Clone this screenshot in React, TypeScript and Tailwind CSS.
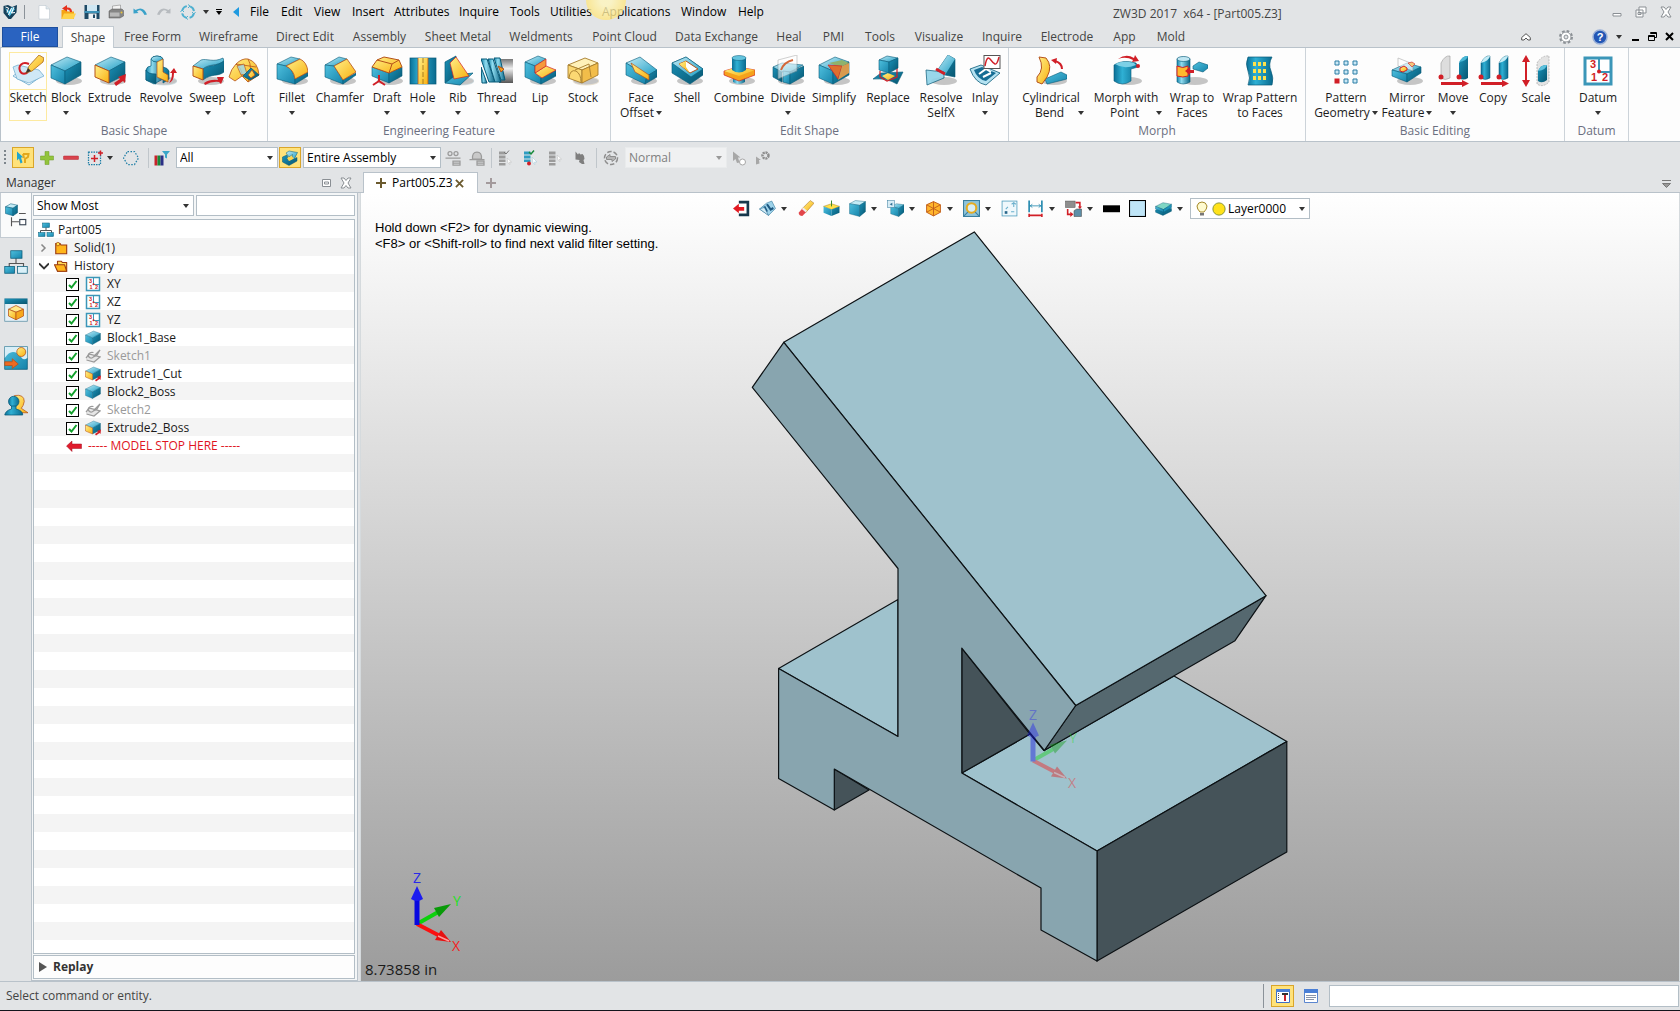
import { ReactNode } from 'react';
import clsx from 'clsx';

// ---------------------------------------------------------------- icons

function Defs() {
  return (
    <svg className="absolute h-0 w-0" aria-hidden="true">
      <defs>
        <linearGradient id="blueTop" x1="0" y1="0" x2="1" y2="1">
          <stop offset="0" stopColor="#c4ecf6" />
          <stop offset="1" stopColor="#1a9cc4" />
        </linearGradient>
        <linearGradient id="blueLeft" x1="0" y1="0" x2="1" y2="1">
          <stop offset="0" stopColor="#4fc0de" />
          <stop offset="1" stopColor="#1583aa" />
        </linearGradient>
        <linearGradient id="blueRight" x1="0" y1="0" x2="1" y2="1">
          <stop offset="0" stopColor="#1b93ba" />
          <stop offset="1" stopColor="#07556f" />
        </linearGradient>
        <linearGradient id="cyl" x1="0" y1="0" x2="1" y2="0">
          <stop offset="0" stopColor="#1283ab" />
          <stop offset="0.35" stopColor="#8fdcf0" />
          <stop offset="1" stopColor="#0a6485" />
        </linearGradient>
        <linearGradient id="slab" x1="0" y1="0" x2="1" y2="0">
          <stop offset="0" stopColor="#0b7097" />
          <stop offset="0.35" stopColor="#2fb0d4" />
          <stop offset="1" stopColor="#0a6a8e" />
        </linearGradient>
        <linearGradient id="gold" x1="0" y1="0" x2="1" y2="1">
          <stop offset="0" stopColor="#fff08a" />
          <stop offset="1" stopColor="#f9b010" />
        </linearGradient>
        <linearGradient id="steel" x1="0" y1="0" x2="0" y2="1">
          <stop offset="0" stopColor="#777" />
          <stop offset="0.4" stopColor="#eee" />
          <stop offset="1" stopColor="#555" />
        </linearGradient>
      </defs>
    </svg>
  );
}

const T = 'url(#blueTop)';
const L = 'url(#blueLeft)';
const R = 'url(#blueRight)';
const C = 'url(#cyl)';
const Y = 'url(#gold)';
const EDGE = '#075a78';
const RED = '#d11f27';
const ORANGE = '#b5521a';

const shadow = <ellipse cx="19" cy="26" rx="13" ry="4" fill="#000" opacity="0.22" />;

const boxFaces = (
  <g stroke={EDGE} strokeWidth="0.6" strokeLinejoin="round">
    <path d="M1 10L17 2L31 7L15 16Z" fill={T} />
    <path d="M1 10L15 16V29L1 23Z" fill={L} />
    <path d="M15 16L31 7V20L15 29Z" fill={R} />
  </g>
);

const extrudeFaces = (
  <g>
    <g stroke={EDGE} strokeWidth="0.6" strokeLinejoin="round">
      <path d="M1 10L17 2L31 7L15 16Z" fill={T} />
      <path d="M15 16L31 7V20L15 28Z" fill={R} />
    </g>
    <path d="M1 10L15 16V28L1 22Z" fill={Y} stroke={ORANGE} />
    <path d="M20 28L26 24L24 22L32 19L31 28L29 26L22 31Z" fill={RED} />
  </g>
);

const icons: Record<string, ReactNode> = {
  sketch: (
    <g>
      <path d="M1 21L12 13L31 20L17 30Z" fill="#fff" stroke="#7fb6d6" />
      <path d="M1 12L6 10L27 15L32 21L17 28L5 24Z" fill="#cfe8f6" stroke="#6aa9cd" strokeWidth="0.7" />
      <path d="M17 9C10 6 6 11 8 16C10 20 14 19 16 17" fill="none" stroke={RED} strokeWidth="2" />
      <path d="M14 18L17 11L27 0L32 3L31 7L20 16Z" fill={Y} stroke="#a8671a" strokeWidth="0.8" />
      <path d="M14 18L16 13L19 16Z" fill="#333" />
    </g>
  ),
  block: <g>{shadow}{boxFaces}</g>,
  extrude: <g>{shadow}{extrudeFaces}</g>,
  revolve: (
    <g stroke={EDGE} strokeWidth="0.7">
      {shadow}
      <path d="M1 15Q2 11 6 11V4Q7 1 12 1T18 4V24L9 29L1 25Z" fill={C} />
      <path d="M6 4Q7 1 12 1T18 4Q17 7 12 7T6 4Z" fill={T} />
      <path d="M1 15Q2 19 11 19V29L1 25Z" fill={R} />
      <path d="M18 12Q23 13 24 16V24L18 28Z" fill={R} />
      <path d="M12 7L18 4V17L23 20V27L12 22Z" fill={Y} stroke={ORANGE} />
      <path d="M24 28Q29 26 29 18H32L29 13L25 18H27Q27 24 24 28Z" fill={RED} stroke="none" />
    </g>
  ),
  sweep: (
    <g>
      {shadow}
      <g stroke={EDGE} strokeWidth="0.6">
        <path d="M1 11L9 5C15 3 21 8 31 3L32 6C24 12 18 8 11 14Z" fill={T} />
        <path d="M11 14C18 9 24 12 32 6V17C26 22 20 18 11 25Z" fill={R} />
      </g>
      <path d="M1 11L11 14V25L1 21Z" fill={Y} stroke={ORANGE} />
      <path d="M12 28Q18 24 26 25L25 22L32 22L29 29L27 27Q20 26 13 30Z" fill={RED} />
    </g>
  ),
  loft: (
    <g stroke={ORANGE} strokeWidth="0.8" strokeLinejoin="round">
      <path d="M1 22Q3 14 8 9Q14 3 20 4Q30 7 31 20L20 27L14 21L7 26Z" fill={Y} />
      <path d="M8 9Q14 13 14 21M20 4Q25 12 20 27M8 9L28 12" fill="none" />
      <path d="M9 11L16 9L19 19L13 20Z" fill="#9fd8ea" opacity="0.8" />
      <path d="M15 21L23 13L31 20L22 25Z" fill={R} stroke={EDGE} />
      <path d="M20 20L24 15L27 20L23 23Z" fill={Y} />
    </g>
  ),
  fillet: (
    <g>
      {shadow}
      <g stroke={EDGE} strokeWidth="0.6">
        <path d="M1 9L15 2L24 4L10 11Z" fill={T} />
        <path d="M1 9L10 11Q17 14 19 24V29L1 24Z" fill={L} />
        <path d="M19 24L32 17V21L19 29Z" fill={R} />
      </g>
      <path d="M10 11L24 4Q31 7 32 17L19 24Q18 15 10 11Z" fill={Y} stroke={ORANGE} strokeWidth="0.8" />
    </g>
  ),
  chamfer: (
    <g>
      {shadow}
      <g stroke={EDGE} strokeWidth="0.6">
        <path d="M1 10L15 2L23 4L10 11Z" fill={T} />
        <path d="M1 10L10 11L19 25V29L1 22Z" fill={L} />
        <path d="M19 25L32 18V20L19 29Z" fill={R} />
      </g>
      <path d="M10 11L23 4L32 17L19 25Z" fill={Y} stroke={ORANGE} strokeWidth="0.8" />
    </g>
  ),
  draft: (
    <g>
      {shadow}
      <g stroke={EDGE} strokeWidth="0.6">
        <path d="M1 12L18 18V28L1 21Z" fill={L} />
        <path d="M18 18L31 12V21L18 28Z" fill={R} />
      </g>
      <path d="M1 12L6 5L13 2L28 5L31 12L18 18Z" fill={Y} stroke={ORANGE} />
      <path d="M6 5L21 9L28 5M21 9L18 18" fill="none" stroke={ORANGE} />
      <path d="M8 20V26L2 30M8 26L14 30" stroke={RED} strokeWidth="2" fill="none" />
    </g>
  ),
  hole: (
    <g>
      <rect x="3" y="3" width="26" height="26" fill="url(#slab)" stroke={EDGE} strokeWidth="0.7" />
      <rect x="11" y="3" width="10" height="26" fill={Y} />
      <path d="M11 3V29M21 3V29" stroke={ORANGE} strokeWidth="0.8" />
      <path d="M16 3V29" stroke="#946b14" strokeWidth="0.8" strokeDasharray="5 2" />
    </g>
  ),
  rib: (
    <g stroke={EDGE} strokeWidth="0.7" strokeLinejoin="round">
      {shadow}
      <path d="M3 7L14 1V20L3 28Z" fill={R} />
      <path d="M3 28L14 20L31 18L18 30Z" fill={L} />
      <path d="M8 8L14 2L27 21L12 24Z" fill={Y} stroke={RED} />
    </g>
  ),
  thread: (
    <g>
      <rect x="18" y="4" width="14" height="24" fill="url(#steel)" />
      <g stroke={EDGE} fill={C}>
        <path d="M0 4H6L14 27H8Z" />
        <path d="M7 4H12L20 27H14Z" />
        <path d="M13 3H19L24 25H20Z" />
        <path d="M0 12L6 28H1Z" />
      </g>
      <path d="M17 11L23 14L20 17Z" fill="#f5a21c" stroke={ORANGE} />
    </g>
  ),
  lip: (
    <g>
      {shadow}
      <g stroke={EDGE} strokeWidth="0.6" strokeLinejoin="round">
        <path d="M1 7L14 1L22 4L11 11Z" fill={T} />
        <path d="M1 7L11 11V18L17 23V29L1 22Z" fill={L} />
        <path d="M17 23L32 15V21L17 29Z" fill={R} />
      </g>
      <path d="M11 18L22 11L32 15L18 23Z" fill={Y} stroke={RED} strokeWidth="0.7" />
      <path d="M11 11L22 4V11L11 18Z" fill="#f59a3c" stroke={RED} strokeWidth="0.7" />
    </g>
  ),
  stock: (
    <g stroke="#a57a2a" strokeWidth="0.9" fill="#fbd873">
      {shadow}
      <path d="M1 10L18 3L31 8L15 15Z" fill="#fff1b8" />
      <path d="M1 10L15 15V28L1 23Z" />
      <path d="M15 15L31 8V20L15 28Z" fill="#f2bd4a" />
      <path d="M2 23Q3 14 9 16Q14 19 14 27M8 15L22 9L24 22" fill="none" />
    </g>
  ),
  faceOffset: (
    <g>
      {shadow}
      <g stroke={EDGE} strokeWidth="0.6">
        <path d="M1 8L15 2L32 15L22 21Z" fill={T} />
        <path d="M1 8L1 20L20 29L22 21Z" fill={L} />
        <path d="M22 21L32 15V22L20 29Z" fill={R} />
      </g>
      <path d="M6 8L24 20V25L10 17Z" fill={Y} stroke={ORANGE} strokeWidth="0.7" />
    </g>
  ),
  shell: (
    <g>
      {shadow}
      <g stroke={EDGE} strokeWidth="0.6">
        <path d="M1 8L15 2L32 14V20L19 29L1 18Z" fill={R} />
        <path d="M1 8L15 2L32 14L20 22Z" fill={T} />
      </g>
      <path d="M8 9L15 6L27 14L19 18Z" fill="#fff" stroke={ORANGE} />
      <path d="M8 9L15 6L15 12L19 18Z" fill={Y} />
    </g>
  ),
  combine: (
    <g>
      {shadow}
      <path d="M10 20H22V27Q16 31 10 27Z" fill={C} />
      <path d="M1 16L15 12L32 15V20L16 26L1 20Z" fill="#f5a21c" stroke={RED} strokeWidth="0.7" />
      <path d="M1 16L15 12L32 15L16 21Z" fill={Y} />
      <path d="M9 3V15Q16 20 23 15V3Z" fill="url(#slab)" />
      <ellipse cx="16" cy="3" rx="7" ry="2.5" fill="#64c4de" stroke={EDGE} strokeWidth="0.5" />
    </g>
  ),
  divide: (
    <g>
      {shadow}
      <g stroke={EDGE} strokeWidth="0.6">
        <path d="M1 12L10 17V27L1 22Z" fill={R} />
        <path d="M1 12L10 8L31 10L18 17L10 17Z" fill={T} />
        <path d="M11 16L18 17V29L11 27Z" fill={L} />
        <path d="M18 17L32 11V21L18 29Z" fill={R} />
      </g>
      <path d="M6 5L25 0V16L6 24Z" fill="#fff" opacity="0.55" stroke="#888" strokeWidth="0.7" />
      <path d="M9 15Q12 7 21 5" fill="none" stroke="#d3683a" strokeWidth="2" />
    </g>
  ),
  simplify: (
    <g>
      {shadow}
      {boxFaces}
      <path d="M11 8L24 5L31 8L22 12Z" fill="#8fb26c" />
      <path d="M10 10L24 11L20 24Z" fill="#dd6f2e" stroke={RED} strokeWidth="0.7" />
      <path d="M24 11L31 8V18L20 25Z" fill="#d89a4e" />
    </g>
  ),
  replace: (
    <g>
      <path d="M1 24L9 18L31 17L25 29Q15 23 1 24Z" fill={R} stroke={EDGE} strokeWidth="0.6" />
      <path d="M8 16V22L15 26L25 22V12" fill="none" stroke={RED} strokeWidth="1.2" />
      <path d="M10 21L16 18L23 21L16 25Z" fill={Y} />
      <g stroke={EDGE} strokeWidth="0.6">
        <path d="M7 5L15 1L26 3L17 7Z" fill={T} />
        <path d="M7 5L17 7V18L7 15Z" fill={L} />
        <path d="M17 7L26 3V13L17 18Z" fill={R} />
      </g>
    </g>
  ),
  resolve: (
    <g>
      {shadow}
      <path d="M12 16L23 0L30 4V22L20 20Z" fill={R} stroke={EDGE} strokeWidth="0.6" />
      <path d="M12 16L23 0L30 4L20 20Z" fill={T} />
      <path d="M1 15L19 17V23L2 30Z" fill="#8fd3e8" stroke={EDGE} strokeWidth="0.8" opacity="0.9" />
      <path d="M11 14L20 19" stroke={RED} strokeWidth="3" />
    </g>
  ),
  inlay: (
    <g>
      <path d="M1 14L12 10L31 18L17 30Q6 28 1 14Z" fill="#b5e2f1" stroke={EDGE} strokeWidth="0.8" />
      <path d="M5 15L13 12L27 18L17 26Q8 24 5 15Z" fill="#166d94" />
      <path d="M10 19L17 14L22 17M14 22L22 18" stroke="#fff" strokeWidth="2" fill="none" />
      <rect x="15" y="0.5" width="16" height="13" fill="#fff" stroke="#555" />
      <path d="M16 11Q18 0 21 4T26 9T30 2" stroke={RED} strokeWidth="1.4" fill="none" />
    </g>
  ),
  cylBend: (
    <g>
      {shadow}
      <path d="M10 24L26 17L32 20V24L12 29Z" fill={L} stroke={EDGE} strokeWidth="0.6" />
      <path d="M4 2L11 3Q18 11 12 22L7 29L2 27V22Q10 14 4 2Z" fill={Y} stroke={ORANGE} />
      <path d="M20 6Q27 8 27 14" fill="none" stroke={RED} strokeWidth="2" />
      <path d="M16 5L22 3L21 9Z" fill={RED} />
    </g>
  ),
  morphPoint: (
    <g>
      {shadow}
      <path d="M4 10V26Q12 32 21 26V14L28 12L26 8Q13 4 4 10Z" fill="url(#slab)" stroke={EDGE} strokeWidth="0.6" />
      <path d="M5 9Q13 5 24 8L26 10Q14 15 5 9Z" fill="#7cd0e6" />
      <circle cx="28" cy="11" r="2" fill={RED} />
      <path d="M8 4Q16 -2 24 3L25 0L29 6L22 7L23 5Q16 1 8 4Z" fill={RED} />
    </g>
  ),
  wrapFaces: (
    <g>
      {shadow}
      <path d="M1 4Q7 0 14 4V27Q7 31 1 27Z" fill={C} stroke={EDGE} strokeWidth="0.6" />
      <ellipse cx="7.5" cy="4" rx="6.5" ry="2.5" fill="#bfe6f2" stroke={EDGE} strokeWidth="0.6" />
      <path d="M1 11Q7 14 12 11V21Q7 23 1 21Z" fill="#ffb92e" stroke={RED} />
      <path d="M9 16L14 12V15H18V18H14V20Z" fill={RED} />
      <path d="M17 11L23 7L32 10V13L27 17L17 14Z" fill={L} stroke={EDGE} strokeWidth="0.6" />
    </g>
  ),
  wrapPattern: (
    <g>
      <path d="M4 2H28Q24 9 27 16T28 30H4Q7 23 4 16T4 2Z" fill="url(#slab)" stroke={EDGE} strokeWidth="0.7" />
      <path
        d="M9 7h3v4h-3zM14 7h3v4h-3zM19 7h3v4h-3zM9 14h3v4h-3zM14 14h3v4h-3zM19 14h3v4h-3zM9 21h3v4h-3zM14 21h3v4h-3zM19 21h3v4h-3z"
        fill="#ffe14a"
      />
    </g>
  ),
  pattern: (
    <g fill="#cbe8f5" stroke="#2d7ea6">
      <path d="M5 6h4v4h-4zM14 6h4v4h-4zM23 6h4v4h-4zM5 15h4v4h-4zM14 15h4v4h-4zM23 15h4v4h-4zM14 24h4v4h-4zM23 24h4v4h-4z" />
      <rect x="5" y="24" width="4" height="4" fill={RED} stroke={RED} />
    </g>
  ),
  mirror: (
    <g>
      {shadow}
      <g stroke={EDGE} strokeWidth="0.6">
        <path d="M1 15L16 8L30 12L16 19Z" fill={T} />
        <path d="M1 15L16 19V27L1 21Z" fill={L} />
        <path d="M16 19L30 12V18L16 27Z" fill={R} />
      </g>
      <path d="M7 3L22 9V16L7 11Z" fill="#fff" opacity="0.6" stroke="#888" strokeWidth="0.7" />
      <path d="M9 13L13 11L16 13V15L12 17L9 16Z" fill={Y} stroke={RED} />
      <path d="M17 8L21 7L24 9L21 12Z" fill="#f3c67a" stroke={RED} strokeWidth="0.6" />
    </g>
  ),
  move: (
    <g>
      <path d="M4 8Q8 0 13 1V23Q8 26 4 23Z" fill="#ddd" stroke="#999" strokeWidth="0.6" />
      <path d="M22 8Q26 0 31 1V23Q26 26 22 23Z" fill={R} />
      <path d="M22 7Q26 0 31 1Q30 6 22 7Z" fill="#4ab8d6" />
      <circle cx="4" cy="22" r="2.5" fill={RED} />
      <circle cx="22" cy="22" r="2.5" fill={RED} />
      <path d="M4 27H25V25L32 28.5L25 32V30H4Z" fill={RED} />
    </g>
  ),
  copy: (
    <g>
      <path d="M4 8Q8 0 13 1V23Q8 26 4 23Z" fill="url(#slab)" stroke={EDGE} strokeWidth="0.5" />
      <path d="M4 8Q8 0 13 1Q12 6 4 8Z" fill="#c4ecf6" />
      <path d="M22 8Q26 0 31 1V23Q26 26 22 23Z" fill="url(#slab)" stroke={EDGE} strokeWidth="0.5" />
      <path d="M22 8Q26 0 31 1Q30 6 22 8Z" fill="#c4ecf6" />
      <circle cx="4" cy="22" r="2.5" fill={RED} />
      <circle cx="22" cy="22" r="2.5" fill={RED} />
      <path d="M4 27H25V25L32 28.5L25 32V30H4Z" fill={RED} />
    </g>
  ),
  scale: (
    <g>
      <path d="M6 0L10 7H7V25H10L6 32L2 25H5V7H2Z" fill={RED} />
      <path d="M17 8Q22 0 29 1V27Q23 33 17 29Z" fill="#e4e4e4" stroke="#999" strokeWidth="0.6" strokeDasharray="2 1" />
      <path d="M18 16Q21 9 27 10V25Q22 29 18 26Z" fill={R} />
      <path d="M18 16Q21 9 27 10Q26 15 18 16Z" fill="#5cc0dc" />
    </g>
  ),
  datum: (
    <g>
      <rect x="3" y="3" width="26" height="26" fill="#fff" stroke="#3b96b8" strokeWidth="3" />
      <path d="M17 3V17M17 17H29" stroke="#3b96b8" strokeWidth="2" fill="none" />
      <circle cx="17" cy="16.5" r="2" fill={RED} />
      <g fill={RED} fontFamily="Liberation Sans" fontWeight="700" fontSize="11">
        <text x="8" y="13">3</text>
        <text x="9" y="26">1</text>
        <text x="20" y="26">2</text>
      </g>
    </g>
  ),
  // tree and side tabs
  blockSmall: <g>{boxFaces}</g>,
  extrudeSmall: <g>{extrudeFaces}</g>,
  sketchOff: (
    <g fill="none" stroke="#9a9a9a" strokeWidth="2.5">
      <path d="M2 20L8 12L30 18L18 28L3 24" fill="#e6e6e6" />
      <path d="M17 9C8 7 4 15 9 19C13 22 17 19 19 15L30 4L24 14L15 19" />
    </g>
  ),
  assembly: (
    <g stroke={EDGE} strokeWidth="1">
      <path d="M16 11V17M5 23V17H27V23" fill="none" stroke="#555" strokeWidth="2" />
      <rect x="9" y="2" width="14" height="9" fill={L} />
      <rect x="1" y="21" width="13" height="8" fill={L} />
      <rect x="18" y="21" width="13" height="8" fill={L} />
    </g>
  ),
  assemblyTab: (
    <g stroke={EDGE} strokeWidth="1">
      <path d="M16 11V18M7 23V18H26V23" fill="none" stroke="#555" strokeWidth="1.5" />
      <rect x="9" y="1" width="15" height="10" fill={L} />
      <rect x="1" y="22" width="13" height="9" fill={L} />
      <rect x="18" y="22" width="13" height="9" fill="#d9f0f8" />
    </g>
  ),
  historyTab: (
    <g>
      <g stroke={EDGE} strokeWidth="0.7">
        <path d="M2 5L9 1L18 3L12 7Z" fill="#c4ecf6" />
        <path d="M2 5L12 7V17L2 14Z" fill={L} />
        <path d="M12 7L18 3V13L12 17Z" fill={R} />
      </g>
      <path d="M20 14H29M10 19V31M10 25H20" stroke="#555" strokeWidth="1.5" fill="none" />
      <rect x="21" y="22" width="8" height="7" fill="#fff" stroke="#3a4654" strokeWidth="1.5" />
    </g>
  ),
  partTab: (
    <g>
      <rect x="1" y="1" width="30" height="30" fill="#e4f1f7" stroke="#5a8ca4" />
      <rect x="1" y="1" width="30" height="7" fill={R} />
      <g stroke={ORANGE}>
        <path d="M6 15L16 10L26 15L16 19Z" fill="#ffe98a" />
        <path d="M6 15L16 19V29L6 24Z" fill={Y} />
        <path d="M16 19L26 15V24L16 29Z" fill="#f6a91e" />
      </g>
    </g>
  ),
  visualTab: (
    <g>
      <rect x="1" y="1" width="30" height="30" fill={L} stroke={EDGE} />
      <path d="M1 1H31V16Q26 20 22 14T12 8T1 16Z" fill="#d8eef7" />
      <circle cx="23" cy="8" r="6" fill={Y} stroke={ORANGE} />
      <path d="M1 21H11V17L19 24L11 30V26H1Z" fill="#ee6a22" stroke={ORANGE} />
    </g>
  ),
  roleTab: (
    <g>
      <path d="M14 2Q27 0 27 10Q26 16 23 19L32 25H18L12 12Z" fill={Y} stroke={ORANGE} />
      <circle cx="13" cy="10" r="7" fill="url(#slab)" stroke={EDGE} />
      <path d="M1 28Q2 22 10 20V16H16V20Q25 22 25 28Z" fill="url(#slab)" stroke={EDGE} />
    </g>
  ),
  folder: (
    <g stroke="#9a3b12" strokeWidth="2.5">
      <path d="M4 6H14L16 9H29V29H4Z" fill="#ffb51c" />
      <circle cx="9" cy="7" r="4" fill="#ffe34d" strokeWidth="1.5" />
    </g>
  ),
  folderOpen: (
    <g stroke="#9a3b12" strokeWidth="2.5" strokeLinejoin="round">
      <path d="M8 5H17L19 8H29V28H8Z" fill="#ffd95a" />
      <path d="M1 13H24L29 28H8Z" fill="#ffb51c" />
    </g>
  ),
  stop: <path d="M1 16L12 6V12H31V21H12V27Z" fill="#e01b2c" stroke="#a31020" />,
  // quick access
  logo: (
    <g>
      <path d="M3 4L12 2L20 6L30 2L29 17L18 30H13L3 18Z" fill="#16425c" />
      <path d="M6 8L14 14L20 6L26 10L15 25Z" fill="#4fc0e4" />
      <path d="M7 6L13 8L10 17M19 8L13 22M24 6L19 18L26 17" stroke="#fff" strokeWidth="2" fill="none" />
    </g>
  ),
  newDoc: (
    <g>
      <path d="M6 3H20L27 10V30H6Z" fill="#fff" stroke="#b4c0c8" />
      <path d="M20 3V10H27" fill="#dde6ec" stroke="#b4c0c8" />
    </g>
  ),
  open: (
    <g>
      <path d="M3 12H13L15 15H28V30H3Z" fill="#f5a416" />
      <path d="M3 30L8 19H32L27 30Z" fill="#ffd34a" />
      <path d="M24 16Q24 6 14 7V2L4 9L14 15V11Q20 10 20 16Z" fill="#e5311d" />
    </g>
  ),
  save: (
    <g>
      <rect x="1" y="2" width="30" height="28" fill="#1f4a66" />
      <rect x="6" y="2" width="20" height="12" fill="#cfe7f3" />
      <rect x="1" y="14" width="30" height="4" fill="#3f93b8" />
      <rect x="9" y="19" width="16" height="11" fill="#eef3f6" />
      <rect x="18" y="21" width="4" height="7" fill="#1f4a66" />
    </g>
  ),
  print: (
    <g>
      <path d="M9 4L25 2V14H9Z" fill="#f4f4f4" stroke="#777" />
      <path d="M2 14L8 10H28L31 13V24L24 28H2Z" fill="#858585" stroke="#555" />
      <path d="M4 17H23V25H4Z" fill="#b9b9b9" />
      <circle cx="27" cy="17" r="2" fill="#e8c33a" />
    </g>
  ),
  undo: <path d="M3 9V19L13 18L10 15Q18 8 25 22L30 21Q23 3 7 12Z" fill="#3aa2c9" />,
  redo: <path d="M29 9V19L19 18L22 15Q14 8 7 22L2 21Q9 3 25 12Z" fill="#b7bbbf" />,
  regen: (
    <g fill="none" stroke="#4fb0d0" strokeWidth="4">
      <circle cx="16" cy="16" r="12" strokeDasharray="12 6.85" strokeDashoffset="-3" />
      <path d="M16 1L20 4L16 8M31 16L28 20L24 16M16 31L12 28L16 24M1 16L4 12L8 16" strokeWidth="2" />
    </g>
  ),
  // selection toolbar
  pick: (
    <g>
      <path d="M4 3L17 15H12L15 25L11 27L8 17L4 21Z" fill="#21a4cf" />
      <path d="M16 8H27L26 14L20 18V26M16 8L18 16" fill="none" stroke="#e5a81a" strokeWidth="4" />
    </g>
  ),
  plus: <path d="M12 3H20V12H29V20H20V29H12V20H3V12H12Z" fill="#93c43c" stroke="#6d9a26" />,
  minus: <rect x="1" y="12" width="30" height="7" rx="1" fill="#d8424c" stroke="#b52a35" />,
  pickBox: (
    <g fill="none">
      <rect x="3" y="4" width="24" height="25" stroke="#1f7ea6" strokeWidth="2.5" strokeDasharray="3 2" />
      <path d="M15 10V24M8 17H22M27 1V11M22 6H32" stroke={RED} strokeWidth="3" />
    </g>
  ),
  hexagon: (
    <path d="M9 3H23L31 16L23 29H9L1 16Z" fill="none" stroke="#1f7ea6" strokeWidth="2.5" strokeDasharray="3 3" />
  ),
  colorFilter: (
    <g>
      <rect x="1" y="11" width="6" height="20" fill="#c8232b" />
      <rect x="7" y="11" width="6" height="20" fill="#178a3a" />
      <rect x="13" y="11" width="6" height="20" fill="#2b2f86" />
      <path d="M16 2H32L26 9V17L22 15V9Z" fill="#3aa6c8" />
    </g>
  ),
  scope: (
    <g stroke={EDGE}>
      <path d="M1 14L10 10L14 22L30 15V22L14 31L1 24Z" fill={R} />
      <path d="M8 6L14 2L31 5L25 17L20 19L21 9L14 14Z" fill={T} />
      <path d="M10 16L20 13L24 17L14 22Z" fill="#ffd34a" stroke="none" />
    </g>
  ),
  chainA: (
    <g stroke="#9b9b9b" strokeWidth="2.5" fill="none">
      <circle cx="10" cy="7" r="4" />
      <circle cx="22" cy="7" r="4" />
      <path d="M1 16H31M16 22H30V30H16ZM16 26H30" />
    </g>
  ),
  chainB: (
    <g stroke="#9b9b9b" strokeWidth="2.5" fill="none">
      <path d="M7 18Q6 4 16 4T25 18Z" fill="#c9c9c9" />
      <path d="M1 19H31M16 22H30V30H16ZM16 26H30" />
    </g>
  ),
  listA: (
    <g fill="#9b9b9b">
      <path d="M4 3h13v6h-13zM4 11h13v6h-13zM4 19h13v5h-13zM4 26h13v5h-13z" />
      <path d="M14 4L18 8L24 1" fill="none" stroke="#777" strokeWidth="2" />
      <path d="M20 16L29 24H25L26 29L22 26Z" fill="#fff" stroke="#bbb" />
    </g>
  ),
  listB: (
    <g fill="#2f9dc2">
      <path d="M4 3h13v6h-13zM4 11h13v6h-13zM4 19h13v5h-13z" />
      <path d="M14 4L18 8L24 1" fill="none" stroke="#178a3a" strokeWidth="3" />
      <circle cx="14" cy="27" r="4" fill={RED} />
      <path d="M20 14L30 24H25L26 29L22 26Z" fill="#fff" stroke="#9fc8d8" />
    </g>
  ),
  listC: (
    <g fill="#9b9b9b">
      <path d="M4 3h13v6h-13zM4 11h13v6h-13zM4 19h13v5h-13zM4 26h13v5h-13z" />
      <path d="M20 10L29 18H25L26 23L22 20Z" fill="#fff" stroke="#bbb" />
    </g>
  ),
  cursor: <path d="M7 3L12 9L14 6L17 9L21 8L24 12L25 18L23 20L25 28H20L14 24L15 20L7 19Z" fill="#7e7e7e" />,
  globe: (
    <g fill="none" stroke="#8e8e8e" strokeWidth="3">
      <circle cx="16" cy="16" r="13" strokeDasharray="9 4" />
      <path d="M7 14L14 9V13H25V18L18 23V19H7Z" fill="#b5b5b5" strokeWidth="2" />
    </g>
  ),
  cursorPlay: (
    <g>
      <path d="M4 3L19 15H14L17 25L12 26L9 18L4 22Z" fill="#a7a7a7" />
      <circle cx="23" cy="24" r="6" fill="#fff" stroke="#a7a7a7" strokeWidth="2" />
    </g>
  ),
  cursorGear: (
    <g>
      <path d="M2 13L12 20H8L9 27L2 29Z" fill="#a7a7a7" />
      <circle cx="21" cy="11" r="6" fill="#e2e4e6" stroke="#8e8e8e" strokeWidth="5" strokeDasharray="4 1.5" />
    </g>
  ),
  // view toolbar
  exit: (
    <g>
      <path d="M11 4H28V28H11" fill="none" stroke="#16384c" strokeWidth="5" />
      <path d="M0 16L11 7V13H21V20H11V25Z" fill="#e21a22" />
    </g>
  ),
  views: (
    <g>
      <path d="M1 17L14 6L24 2L31 16L18 29Z" fill="#9ed3ea" stroke="#2a6f96" />
      <path d="M10 12L15 22M15 8L22 18L27 15" stroke="#1d5780" strokeWidth="4" fill="none" />
      <path d="M1 17L10 14L18 29Z" fill="#d5edf7" stroke="#2a6f96" />
    </g>
  ),
  eraser: (
    <g>
      <path d="M10 16L25 1L32 6L17 23Z" fill={Y} stroke="#a5722a" />
      <path d="M3 24L10 16L17 23L10 30Q4 30 3 24Z" fill="#e2464a" />
      <path d="M9 17L12 14L19 20L16 23Z" fill="#eee" />
    </g>
  ),
  viewNormal: (
    <g>
      <path d="M1 12L16 7L31 12L16 18Z" fill="#ffe14a" stroke="#b38a1a" />
      <path d="M1 12L16 18V30L1 24Z" fill={L} />
      <path d="M16 18L31 12V24L16 30Z" fill={R} />
      <path d="M16 1V12" stroke="#3c8a2c" strokeWidth="2" />
    </g>
  ),
  shaded: (
    <g stroke={EDGE} strokeWidth="0.7" strokeLinejoin="round">
      <path d="M1 7L12 1L31 3L20 10Z" fill="#c4ecf6" />
      <path d="M1 7L20 10V31L1 26Z" fill={L} />
      <path d="M20 10L31 3V22L20 31Z" fill={R} />
    </g>
  ),
  wireBox: (
    <g fill="#ffb52c" stroke="#c2601c" strokeWidth="1.8" strokeLinejoin="round">
      <path d="M16 3L29 9V23L16 30L3 23V9Z" />
      <path d="M16 3V30M3 9L29 23M29 9L3 23" fill="none" />
    </g>
  ),
  boxViews: (
    <g>
      <g stroke={EDGE} strokeWidth="0.7">
        <path d="M7 12L18 7L32 9L22 16Z" fill={T} />
        <path d="M7 12L22 16V31L7 26Z" fill={L} />
        <path d="M22 16L32 9V23L22 31Z" fill={R} />
      </g>
      <rect x="1" y="1" width="13" height="13" fill="#d8edf6" stroke="#3a7f9f" />
      <path d="M5 8L10 5V11Z" fill="#2d6f94" />
    </g>
  ),
  zoomAll: (
    <g>
      <rect x="1" y="1" width="30" height="30" fill="#8fc5dc" stroke="#3a7f9f" strokeWidth="2" />
      <circle cx="16" cy="15" r="9" fill="#d9eef7" stroke="#e6ac22" strokeWidth="4" />
      <path d="M2 30L9 23M30 30L23 23" stroke="#3a7f9f" strokeWidth="2" />
    </g>
  ),
  pan: (
    <g>
      <rect x="2" y="2" width="28" height="28" fill="#eff8fc" stroke="#4f9dbd" strokeWidth="1.5" />
      <rect x="7" y="21" width="5" height="5" fill="#28668a" />
      <path d="M13 13L9 17M24 6V13M20 8L24 5L28 8M19 22H25" fill="none" stroke="#68aecb" strokeWidth="2" />
    </g>
  ),
  section: (
    <g fill="none">
      <path d="M4 1V23M28 1V23" stroke="#1f86ad" strokeWidth="3" />
      <path d="M5 11H27M10 8L6 11L10 14M22 8L26 11L22 14" stroke="#1f86ad" strokeWidth="1.5" />
      <path d="M4 29H28M4 26V32M28 26V32" stroke={RED} strokeWidth="3" />
    </g>
  ),
  swap: (
    <g>
      <rect x="1" y="2" width="18" height="12" fill="#8e8e8e" stroke="#555" />
      <path d="M17 20L22 17H31V31H17Z" fill="#5d8fa8" stroke="#444" />
      <path d="M5 17V27H12M20 5H28V14" fill="none" stroke={RED} strokeWidth="3" />
      <path d="M24 12H32L28 17ZM10 22V32L16 27Z" fill={RED} />
    </g>
  ),
  layers: (
    <g stroke={EDGE} strokeWidth="0.7">
      <path d="M1 19L18 14L31 16V21L15 29L1 23Z" fill={R} />
      <path d="M1 12L15 5L31 8L16 18Z" fill="#7fd6c4" />
      <path d="M1 12L16 18V23L1 17Z" fill={L} />
      <path d="M16 18L31 8V14L16 23Z" fill="#1b93ba" />
    </g>
  ),
  blackBar: <rect x="0" y="10" width="32" height="13" fill="#000" />,
  swatch: <rect x="1" y="1" width="30" height="30" fill="#bfe5f7" stroke="#000" strokeWidth="2" />,
};

function Icon({ name, className }: { name: string; className: string }) {
  return (
    <svg viewBox="0 0 32 32" className={clsx('shrink-0', className)} aria-hidden="true">
      {icons[name]}
    </svg>
  );
}

function Caret({ className = 'text-[#333]' }: { className?: string }) {
  return (
    <svg viewBox="0 0 6 4" className={clsx('h-1 w-1.5 shrink-0', className)} aria-hidden="true">
      <path d="M0 0H6L3 4Z" fill="currentColor" />
    </svg>
  );
}

// ---------------------------------------------------------------- controls

interface ComboProps {
  label: string;
  value: string;
  className: string;
  disabled?: boolean;
}

function Combo({ label, value, className, disabled }: ComboProps) {
  return (
    <div className={clsx('relative h-[21px] shrink-0', className)}>
      <select
        aria-label={label}
        disabled={disabled}
        className={clsx(
          'h-full w-full appearance-none border pr-4 pl-[3px] text-xs outline-none',
          disabled ? 'border-[#e9ebec] bg-[#f0f1f2] text-[#808080]' : 'border-[#b3bec6] bg-white text-black'
        )}
      >
        <option>{value}</option>
      </select>
      <span className="pointer-events-none absolute inset-y-0 right-[5px] flex items-center">
        <Caret className={disabled ? 'text-[#999]' : 'text-[#333]'} />
      </span>
    </div>
  );
}

function IconButton({ icon, label, className, size = 'size-4', active }: {
  icon: string;
  label: string;
  className?: string;
  size?: string;
  active?: boolean;
}) {
  return (
    <button
      type="button"
      aria-label={label}
      className={clsx(
        'flex shrink-0 items-center justify-center',
        active && 'h-[21px] border border-[#d9a52a] bg-[#ffe27a]',
        className
      )}
    >
      <Icon name={icon} className={size} />
    </button>
  );
}

// ---------------------------------------------------------------- title bar

const menus = [
  { label: 'File', w: 'w-[31px]' },
  { label: 'Edit', w: 'w-[33px]' },
  { label: 'View', w: 'w-[38px]' },
  { label: 'Insert', w: 'w-[42px]' },
  { label: 'Attributes', w: 'w-[65px]' },
  { label: 'Inquire', w: 'w-[51px]' },
  { label: 'Tools', w: 'w-[40px]' },
  { label: 'Utilities', w: 'w-[52px]' },
  { label: 'Applications', w: 'w-[79px]' },
  { label: 'Window', w: 'w-[57px]' },
  { label: 'Help', w: 'w-[40px]' },
];

const quickAccess = [
  { icon: 'newDoc', label: 'New' },
  { icon: 'open', label: 'Open' },
  { icon: 'save', label: 'Save' },
  { icon: 'print', label: 'Print' },
  { icon: 'undo', label: 'Undo' },
  { icon: 'redo', label: 'Redo' },
  { icon: 'regen', label: 'Regenerate' },
];

function TitleBar() {
  return (
    <header className="relative flex h-[26px] shrink-0 items-center pb-0.5">
      <Icon name="logo" className="ml-0.5 size-4" />
      <span className="mx-1.5 h-3.5 w-px bg-[#8b9299]" />
      <span className="w-px" />
      {quickAccess.map((q) => (
        <IconButton key={q.label} icon={q.icon} label={q.label} className="w-6" />
      ))}
      <button type="button" aria-label="Regenerate options" className="flex w-3 justify-center">
        <Caret />
      </button>
      <button type="button" aria-label="Customize" className="flex w-3.5 flex-col items-center gap-px">
        <span className="h-px w-1.5 bg-black" />
        <Caret className="text-black" />
      </button>
      <button type="button" aria-label="Collapse menu" className="flex w-5 justify-center">
        <svg viewBox="0 0 6 10" className="h-2.5 w-1.5">
          <path d="M6 0V10L0 5Z" fill="#1f9ae0" />
        </svg>
      </button>
      <nav className="ml-1 flex text-black">
        {menus.map((m) => (
          <button type="button" key={m.label} className={clsx('text-left whitespace-nowrap', m.w)}>
            {m.label}
          </button>
        ))}
      </nav>
      <span className="pointer-events-none absolute top-0 left-[586px] h-5 w-10 overflow-hidden">
        <span className="block size-10 -translate-y-1/2 rounded-full bg-[radial-gradient(circle,#fff6bdcc_20%,#ffe47acc_75%,#f5cf52aa_100%)]" />
      </span>
      <h1 className="absolute left-[1113px] pt-1 whitespace-pre text-[#444]">ZW3D 2017  x64 - [Part005.Z3]</h1>
      <div className="ml-auto flex items-center gap-[13px] pr-2 text-[#8a8f94]">
        <button type="button" aria-label="Minimize">
          <svg viewBox="0 0 10 10" className="size-2.5">
            <path d="M1 6.5H9V9H1Z" fill="#fff" stroke="currentColor" />
          </svg>
        </button>
        <button type="button" aria-label="Restore">
          <svg viewBox="0 0 12 12" className="size-3">
            <path d="M4 1H11V7H4ZM1 4H8V11H1ZM3 6.5H6V8.5H3Z" fill="#fff" stroke="currentColor" />
          </svg>
        </button>
        <button type="button" aria-label="Close">
          <svg viewBox="0 0 12 12" className="size-3">
            <path d="M1 1H4L6 3.5L8 1H11L8 6L11 11H8L6 8.5L4 11H1L4 6Z" fill="#fff" stroke="currentColor" />
          </svg>
        </button>
      </div>
    </header>
  );
}

// ---------------------------------------------------------------- ribbon

const tabs = [
  { label: 'Free Form', w: 'w-[75px]' },
  { label: 'Wireframe', w: 'w-[77px]' },
  { label: 'Direct Edit', w: 'w-[76px]' },
  { label: 'Assembly', w: 'w-[73px]' },
  { label: 'Sheet Metal', w: 'w-[84px]' },
  { label: 'Weldments', w: 'w-[82px]' },
  { label: 'Point Cloud', w: 'w-[85px]' },
  { label: 'Data Exchange', w: 'w-[99px]' },
  { label: 'Heal', w: 'w-[46px]' },
  { label: 'PMI', w: 'w-[43px]' },
  { label: 'Tools', w: 'w-[50px]' },
  { label: 'Visualize', w: 'w-[68px]' },
  { label: 'Inquire', w: 'w-[58px]' },
  { label: 'Electrode', w: 'w-[72px]' },
  { label: 'App', w: 'w-[43px]' },
  { label: 'Mold', w: 'w-[50px]' },
];

function RibbonTabs() {
  return (
    <div className="flex h-[21px] shrink-0 items-end text-[#444]">
      <button type="button" className="ml-0.5 h-[20px] w-14 border border-[#1d4f9e] bg-[#2a63c0] text-white">
        File
      </button>
      <button
        type="button"
        className="relative z-10 mr-px -mb-px ml-1 h-[22px] w-[52px] border border-b-0 border-[#c3cbd2] bg-[#fdfdfd]"
      >
        Shape
      </button>
      {tabs.map((t) => (
        <button type="button" key={t.label} className={clsx('h-[20px] shrink-0 whitespace-nowrap', t.w)}>
          {t.label}
        </button>
      ))}
      <div className="ml-auto flex h-full items-center pr-1.5">
        <button type="button" aria-label="Collapse ribbon" className="mr-[27px]">
          <svg viewBox="0 0 10 8" className="h-2 w-2.5">
            <path d="M5 0.7L9.3 4.5V7H7L5 5L3 7H0.7V4.5Z" fill="#fff" stroke="#555" />
          </svg>
        </button>
        <button type="button" aria-label="Settings" className="mr-[18px]">
          <svg viewBox="0 0 16 16" className="size-4">
            <circle cx="8" cy="8" r="6" fill="#fff" stroke="#8c9196" strokeWidth="2" strokeDasharray="2.7 2" />
            <circle cx="8" cy="8" r="5" fill="#fff" stroke="#8c9196" />
            <circle cx="8" cy="8" r="2" fill="#e2e4e6" stroke="#8c9196" />
          </svg>
        </button>
        <button type="button" aria-label="Help" className="mr-2">
          <svg viewBox="0 0 16 16" className="size-4">
            <circle cx="8" cy="8" r="7" fill="#2457b5" stroke="#9ab1d8" strokeWidth="1.5" />
            <text x="8" y="12" textAnchor="middle" fontSize="11" fontWeight="700" fontFamily="Liberation Sans" fill="#fff">
              ?
            </text>
          </svg>
        </button>
        <Caret />
        <div className="ml-2.5 flex items-center gap-2 text-black">
          <button type="button" aria-label="Minimize document">
            <svg viewBox="0 0 8 9" className="h-[9px] w-2">
              <path d="M0 7H7V9H0Z" fill="currentColor" />
            </svg>
          </button>
          <button type="button" aria-label="Restore document">
            <svg viewBox="0 0 9 9" className="size-[9px]" fill="none" stroke="currentColor">
              <path d="M2.5 1.5V0.5H8.5V5.5H6.5M0.5 3.5H6.5V8.5H0.5ZM0.5 4.5H6.5M2.5 1.5H8.5" />
            </svg>
          </button>
          <button type="button" aria-label="Close document">
            <svg viewBox="0 0 9 9" className="size-[9px]">
              <path d="M1 1L8 8M8 1L1 8" stroke="currentColor" strokeWidth="2" />
            </svg>
          </button>
        </div>
      </div>
    </div>
  );
}

interface Tool {
  icon: string;
  lines: string[];
  w: string;
  arrow?: 'below' | 'inline' | 'side';
  hot?: boolean;
}

const groups: { label: string; w: string; pad: string; tools: Tool[] }[] = [
  {
    label: 'Basic Shape',
    w: 'w-[267px]',
    pad: 'pl-2',
    tools: [
      { icon: 'sketch', lines: ['Sketch'], w: 'w-[38px]', arrow: 'below', hot: true },
      { icon: 'block', lines: ['Block'], w: 'w-[38px]', arrow: 'below' },
      { icon: 'extrude', lines: ['Extrude'], w: 'w-[49px]' },
      { icon: 'revolve', lines: ['Revolve'], w: 'w-[54px]' },
      { icon: 'sweep', lines: ['Sweep'], w: 'w-[39px]', arrow: 'below' },
      { icon: 'loft', lines: ['Loft'], w: 'w-[34px]', arrow: 'below' },
    ],
  },
  {
    label: 'Engineering Feature',
    w: 'w-[343px]',
    pad: 'pl-1',
    tools: [
      { icon: 'fillet', lines: ['Fillet'], w: 'w-[40px]', arrow: 'below' },
      { icon: 'chamfer', lines: ['Chamfer'], w: 'w-[56px]' },
      { icon: 'draft', lines: ['Draft'], w: 'w-[38px]', arrow: 'below' },
      { icon: 'hole', lines: ['Hole'], w: 'w-[33px]', arrow: 'below' },
      { icon: 'rib', lines: ['Rib'], w: 'w-[38px]', arrow: 'below' },
      { icon: 'thread', lines: ['Thread'], w: 'w-[40px]', arrow: 'below' },
      { icon: 'lip', lines: ['Lip'], w: 'w-[46px]' },
      { icon: 'stock', lines: ['Stock'], w: 'w-[40px]' },
    ],
  },
  {
    label: 'Edit Shape',
    w: 'w-[398px]',
    pad: 'pl-[5px]',
    tools: [
      { icon: 'faceOffset', lines: ['Face', 'Offset'], w: 'w-[50px]', arrow: 'inline' },
      { icon: 'shell', lines: ['Shell'], w: 'w-[42px]' },
      { icon: 'combine', lines: ['Combine'], w: 'w-[62px]' },
      { icon: 'divide', lines: ['Divide'], w: 'w-[36px]', arrow: 'below' },
      { icon: 'simplify', lines: ['Simplify'], w: 'w-[56px]' },
      { icon: 'replace', lines: ['Replace'], w: 'w-[52px]' },
      { icon: 'resolve', lines: ['Resolve', 'SelfX'], w: 'w-[54px]' },
      { icon: 'inlay', lines: ['Inlay'], w: 'w-[34px]', arrow: 'below' },
    ],
  },
  {
    label: 'Morph',
    w: 'w-[297px]',
    pad: 'pl-1.5',
    tools: [
      { icon: 'cylBend', lines: ['Cylindrical', 'Bend'], w: 'w-[72px]', arrow: 'side' },
      { icon: 'morphPoint', lines: ['Morph with', 'Point'], w: 'w-[78px]', arrow: 'side' },
      { icon: 'wrapFaces', lines: ['Wrap to', 'Faces'], w: 'w-[54px]' },
      { icon: 'wrapPattern', lines: ['Wrap Pattern', 'to Faces'], w: 'w-[82px]' },
    ],
  },
  {
    label: 'Basic Editing',
    w: 'w-[259px]',
    pad: 'pl-1.5',
    tools: [
      { icon: 'pattern', lines: ['Pattern', 'Geometry'], w: 'w-[68px]', arrow: 'inline' },
      { icon: 'mirror', lines: ['Mirror', 'Feature'], w: 'w-[54px]', arrow: 'inline' },
      { icon: 'move', lines: ['Move'], w: 'w-[38px]', arrow: 'below' },
      { icon: 'copy', lines: ['Copy'], w: 'w-[42px]' },
      { icon: 'scale', lines: ['Scale'], w: 'w-[44px]' },
    ],
  },
  {
    label: 'Datum',
    w: 'w-[64px]',
    pad: 'pl-3',
    tools: [{ icon: 'datum', lines: ['Datum'], w: 'w-[42px]', arrow: 'below' }],
  },
];

function ToolButton({ tool }: { tool: Tool }) {
  return (
    <button
      type="button"
      className={clsx('relative flex h-[75px] shrink-0 flex-col items-center pt-[7px] whitespace-nowrap', tool.w)}
    >
      {tool.hot && (
        <span className="absolute inset-x-0 top-1 h-[69px] border border-[#fdeaa0]">
          <span className="block h-[37px] border-b border-[#fdeaa0]" />
        </span>
      )}
      <Icon name={tool.icon} className="relative size-8" />
      <span className="relative mt-[3px] h-[15px] leading-4">{tool.lines[0]}</span>
      <span className="flex h-4 w-full items-center justify-center leading-4">
        {tool.arrow === 'side' && <span className="flex-1" />}
        {tool.lines[1]}
        {tool.arrow === 'inline' && <Caret className="ml-0.5 text-[#333]" />}
        {tool.arrow === 'below' && <Caret />}
        {tool.arrow === 'side' && (
          <span className="flex flex-1 justify-end pr-[3px]">
            <Caret />
          </span>
        )}
      </span>
    </button>
  );
}

function Ribbon() {
  return (
    <div className="flex h-[95px] shrink-0 border-y border-l border-[#b9c2ca] bg-[#fdfdfd] text-[#1c1c1c]">
      {groups.map((g) => (
        <section key={g.label} className={clsx('flex shrink-0 flex-col border-r border-[#ccd3d9]', g.w)}>
          <div className={clsx('flex', g.pad)}>
            {g.tools.map((t) => (
              <ToolButton key={t.lines.join(' ')} tool={t} />
            ))}
          </div>
          <h2 className="text-center leading-4 text-[#6b6f80]">{g.label}</h2>
        </section>
      ))}
    </div>
  );
}

// ---------------------------------------------------------------- selection bar

function SelectionBar() {
  return (
    <div className="flex h-[31px] shrink-0 items-center">
      <span className="mr-1.5 ml-1 h-4 w-0.5 bg-[repeating-linear-gradient(#7d858c_0_2px,transparent_2px_4px)]" />
      <IconButton icon="pick" label="Pick" active className="w-[22px]" />
      <IconButton icon="plus" label="Add to selection" className="ml-px w-6" />
      <IconButton icon="minus" label="Remove from selection" className="w-6" />
      <IconButton icon="pickBox" label="Pick by box" className="w-6" />
      <Caret />
      <IconButton icon="hexagon" label="Pick by polygon" className="ml-[5px] w-[26px]" />
      <span className="ml-1 h-5 w-px bg-[#c0c6cb]" />
      <IconButton icon="colorFilter" label="Color filter" className="ml-0.5 w-[22px]" />
      <Combo label="Entity filter" value="All" className="ml-[3px] w-[102px]" />
      <IconButton icon="scope" label="Selection scope" active className="ml-px w-[22px]" />
      <Combo label="Scope" value="Entire Assembly" className="ml-0.5 w-[138px]" />
      <IconButton icon="chainA" label="Chain" className="w-6" />
      <IconButton icon="chainB" label="Tangent chain" className="w-6" />
      <span className="ml-0.5 h-5 w-px bg-[#c0c6cb]" />
      <IconButton icon="listA" label="Pick first" className="w-[25px]" />
      <IconButton icon="listB" label="Pick next" className="w-[25px]" />
      <IconButton icon="listC" label="Pick last" className="w-[25px]" />
      <IconButton icon="cursor" label="Pick other" className="w-[25px]" />
      <span className="ml-1 h-5 w-px bg-[#c0c6cb]" />
      <IconButton icon="globe" label="Filter mode" className="ml-0.5 w-6" />
      <Combo label="Mode" value="Normal" disabled className="ml-0.5 w-[102px]" />
      <IconButton icon="cursorPlay" label="Run filter" className="w-6" />
      <IconButton icon="cursorGear" label="Filter settings" className="w-6" />
    </div>
  );
}

// ---------------------------------------------------------------- manager

const sideTabs = [
  { icon: 'historyTab', label: 'History Manager' },
  { icon: 'assemblyTab', label: 'Assembly Manager' },
  { icon: 'partTab', label: 'View Manager' },
  { icon: 'visualTab', label: 'Visual Manager' },
  { icon: 'roleTab', label: 'Role Manager' },
];

const history = [
  { label: 'XY', icon: 'datum' },
  { label: 'XZ', icon: 'datum' },
  { label: 'YZ', icon: 'datum' },
  { label: 'Block1_Base', icon: 'blockSmall' },
  { label: 'Sketch1', icon: 'sketchOff', muted: true },
  { label: 'Extrude1_Cut', icon: 'extrudeSmall' },
  { label: 'Block2_Boss', icon: 'blockSmall' },
  { label: 'Sketch2', icon: 'sketchOff', muted: true },
  { label: 'Extrude2_Boss', icon: 'extrudeSmall' },
];

function HistoryRow({ label, icon, muted }: { label: string; icon: string; muted?: boolean }) {
  return (
    <li>
      <label className="flex h-[18px] items-center pl-8">
        <span className="relative size-[13px]">
          <input
            type="checkbox"
            defaultChecked
            className="peer block size-[13px] appearance-none border border-black bg-white"
          />
          <svg
            viewBox="0 0 13 13"
            className="pointer-events-none absolute inset-0 hidden size-[13px] peer-checked:block"
            aria-hidden="true"
          >
            <path d="M3 7L5.5 9.5L10.5 3" fill="none" stroke="#12a02c" strokeWidth="2" />
          </svg>
        </span>
        <Icon name={icon} className="ml-1.5 size-4" />
        <span className={clsx('ml-1.5', muted && 'text-[#9a9a9a]')}>{label}</span>
      </label>
    </li>
  );
}

function Manager() {
  return (
    <aside className="flex w-[360px] shrink-0 flex-col">
      <div className="flex h-5 shrink-0 items-center border-b border-[#b9c2ca] pr-2 pl-1.5 text-[#333]">
        Manager
        <div className="ml-auto flex items-center gap-[9px] text-[#8a8f94]">
          <button type="button" aria-label="Dock panel">
            <svg viewBox="0 0 9 8" className="h-2 w-[9px]" fill="#fff" stroke="currentColor">
              <path d="M0.5 0.5H8.5V7.5H0.5Z" />
              <path d="M2.5 3H6.5V5H2.5Z" />
            </svg>
          </button>
          <button type="button" aria-label="Close panel">
            <svg viewBox="0 0 12 12" className="size-3">
              <path d="M1 1H4L6 3.5L8 1H11L8 6L11 11H8L6 8.5L4 11H1L4 6Z" fill="#fff" stroke="currentColor" />
            </svg>
          </button>
        </div>
      </div>
      <div className="flex min-h-0 flex-1">
        <div className="flex w-[31px] shrink-0 flex-col">
          {sideTabs.map((t, i) => (
            <button
              type="button"
              key={t.label}
              aria-label={t.label}
              className={clsx(
                'flex items-center justify-center',
                i === 0 ? 'h-[45px] border-b border-l border-[#c3cbd2] bg-[#fafbfb]' : 'h-12'
              )}
            >
              <Icon name={t.icon} className="size-6" />
            </button>
          ))}
        </div>
        <div className="mr-0.5 flex w-[327px] flex-col border-r border-b border-l border-[#b9c2ca] bg-[#f4f6f7] p-px pt-0.5 pr-0.5">
          <div className="flex shrink-0 gap-0.5">
            <Combo label="Display" value="Show Most" className="w-[161px]" />
            <input
              aria-label="Search history"
              className="h-[21px] min-w-0 flex-1 border border-[#b3bec6] bg-white px-1 outline-none"
            />
          </div>
          <ul className="mt-[3px] min-h-0 flex-1 overflow-hidden border border-[#b3bec6] bg-[repeating-linear-gradient(#ffffff_0_18px,#f4f4f4_18px_36px)] pt-px text-[#1a1a1a]">
            <li className="flex h-[18px] items-center pl-1">
              <Icon name="assembly" className="size-4" />
              <span className="ml-1">Part005</span>
            </li>
            <li className="flex h-[18px] items-center pl-0.5">
              <svg viewBox="0 0 16 16" className="size-4 p-1" aria-hidden="true">
                <path d="M3 1L10 8L3 15" fill="none" stroke="#888" strokeWidth="3" />
              </svg>
              <Icon name="folder" className="ml-0.5 size-3.5" />
              <span className="ml-1.5">Solid(1)</span>
            </li>
            <li>
              <div className="flex h-[18px] items-center pl-0.5">
                <svg viewBox="0 0 16 16" className="size-4 p-[3px]" aria-hidden="true">
                  <path d="M0 4L8 12L16 4" fill="none" stroke="#333" strokeWidth="3" />
                </svg>
                <Icon name="folderOpen" className="ml-0.5 size-3.5" />
                <span className="ml-1.5">History</span>
              </div>
              <ul>
                {history.map((h) => (
                  <HistoryRow key={h.label} {...h} />
                ))}
                <li className="flex h-[18px] items-center pl-8 text-[#e0141e]">
                  <Icon name="stop" className="size-4" />
                  <span className="ml-1.5">----- MODEL STOP HERE -----</span>
                </li>
              </ul>
            </li>
          </ul>
          <button
            type="button"
            className="mt-px flex h-6 shrink-0 items-center border border-[#b3bec6] bg-[#fdfdfd] pl-[5px] font-bold text-[#333]"
          >
            <svg viewBox="0 0 8 10" className="mr-1.5 h-2.5 w-2" aria-hidden="true">
              <path d="M0 0L8 5L0 10Z" fill="#555" />
            </svg>
            Replay
          </button>
        </div>
      </div>
    </aside>
  );
}

// ---------------------------------------------------------------- viewport

const viewTools = [
  { icon: 'exit', label: 'Exit' },
  { icon: 'views', label: 'Views', arrow: true },
  { icon: 'eraser', label: 'Erase' },
  { icon: 'viewNormal', label: 'Align view' },
  { icon: 'shaded', label: 'Shaded', arrow: true },
  { icon: 'boxViews', label: 'Standard views', arrow: true },
  { icon: 'wireBox', label: 'Wireframe display', arrow: true },
  { icon: 'zoomAll', label: 'Zoom all', arrow: true },
  { icon: 'pan', label: 'Pan' },
  { icon: 'section', label: 'Section view', arrow: true },
  { icon: 'swap', label: 'Show and hide', arrow: true },
  { icon: 'blackBar', label: 'Line color' },
  { icon: 'swatch', label: 'Face color' },
  { icon: 'layers', label: 'Layers', arrow: true },
];

function ViewToolbar() {
  return (
    <div className="relative flex h-[21px] items-center justify-center gap-1">
      {viewTools.map((t) => (
        <button type="button" key={t.label} aria-label={t.label} className="flex shrink-0 items-center">
          <span className="flex w-[22px] justify-center">
            <Icon name={t.icon} className="size-[17px]" />
          </span>
          {t.arrow && (
            <span className="flex w-3 justify-center">
              <Caret />
            </span>
          )}
        </button>
      ))}
      <div className="relative h-[21px] w-[120px] shrink-0">
        <select
          aria-label="Layer"
          className="h-full w-full appearance-none border border-[#b3bec6] bg-white pl-[37px] text-xs text-black outline-none"
        >
          <option>Layer0000</option>
        </select>
        <span className="pointer-events-none absolute inset-y-0 right-[5px] left-1.5 flex items-center">
          <svg viewBox="0 0 12 16" className="h-4 w-3" aria-hidden="true">
            <path d="M4 11Q1 8 1 5Q2 1 6 1T11 5Q11 8 8 11Z" fill="#fffbd0" stroke="#a58a2a" />
            <path d="M4 12H8V14.5H4Z" fill="#777" />
          </svg>
          <svg viewBox="0 0 16 16" className="ml-1 size-3.5" aria-hidden="true">
            <circle cx="8" cy="8" r="7" fill="#ffe21a" stroke="#7c8a2a" />
          </svg>
          <span className="ml-auto">
            <Caret />
          </span>
        </span>
      </div>
    </div>
  );
}

// Axes in their own 60x84 frame, origin at (12, 54)
function Axes() {
  return (
    <g>
      <path d="M12 54L35 41" stroke="#0cd20c" strokeWidth="4" />
      <path d="M29 38L46 34L34 47Z" fill="#089a08" />
      <path d="M12 54L35 66" stroke="#fb1010" strokeWidth="4" />
      <path d="M36 60L46 72L30 70Z" fill="#e81010" />
      <path d="M33 66L44 71" stroke="#ff9a9a" strokeWidth="1.5" />
      <path d="M12 55V28" stroke="#0808e0" strokeWidth="5" />
      <path d="M12 16L18 29Q12 33 6 29Z" fill="#1c1cf0" />
      <g fontFamily="Open Sans" fontSize="14" textAnchor="middle">
        <text x="12" y="13" fill="#2a2ae8">Z</text>
        <text x="52" y="36" fill="#1fe01f">Y</text>
        <text x="51" y="81" fill="#f51c1c">X</text>
      </g>
    </g>
  );
}

function Model() {
  return (
    <svg viewBox="361 194 1318 787" className="absolute inset-0 h-full w-full" role="img" aria-label="Part005 model">
      <g stroke="#0c1114" strokeWidth="1.2" strokeLinejoin="round">
        <path d="M778.6 669L898 600V737Z" fill="#9fc2cd" />
        <path d="M834.3 769.6L869 790.6L834.3 810.4Z" fill="#455359" />
        <path d="M961.8 773.6L1030 734.6L1044 751L1174 676.6L1286.8 742L1097 851.6Z" fill="#9fc2cd" />
        <path d="M961.8 648.6L1030 734.6L961.8 773.6Z" fill="#455359" />
        <path d="M1286.8 742V852.4L1097 961.6V851.6Z" fill="#455359" />
        <path d="M1266 596.2L1235 641.2L1044.3 751L1075.7 706Z" fill="#55686f" />
        <path d="M974.3 232.4L1266 596.2L1075.7 706L783.8 342.8Z" fill="#9fc2cd" />
        <path
          d="M783.8 342.8L752.3 387.8L898 569V737L778.6 669V779L834.3 810.4V769.6L1041 888.6V930.4L1097 961.6V851.6L961.8 773.6V648.6L1044.3 751L1075.7 706Z"
          fill="#88a5af"
        />
      </g>
      <g transform="translate(1021 707)" opacity="0.4">
        <Axes />
      </g>
    </svg>
  );
}

function Viewport() {
  return (
    <main className="flex min-w-0 flex-1 flex-col">
      <div className="flex h-5 shrink-0 items-end pl-[3px] shadow-[inset_0_-1px_0_#b9c2ca]">
        <div className="flex h-[21px] w-[115px] items-center border border-b-0 border-[#b9c2ca] bg-white pl-3 text-black">
          <svg viewBox="0 0 10 10" className="size-2.5 shrink-0" aria-hidden="true">
            <path d="M5 0V10M0 5H10" stroke="#6b5a2e" strokeWidth="2" />
          </svg>
          <span className="ml-1.5 w-[63px] shrink-0">Part005.Z3</span>
          <button type="button" aria-label="Close tab" className="shrink-0">
            <svg viewBox="0 0 10 10" className="size-[9px]">
              <path d="M1 1L9 9M9 1L1 9" stroke="#6b5a2e" strokeWidth="2" />
            </svg>
          </button>
        </div>
        <button type="button" aria-label="New tab" className="mb-[5px] ml-2">
          <svg viewBox="0 0 10 10" className="size-2.5">
            <path d="M5 0V10M0 5H10" stroke="#a39a9c" strokeWidth="2" />
          </svg>
        </button>
        <button type="button" aria-label="Tab list" className="mr-[9px] mb-[5px] ml-auto">
          <svg viewBox="0 0 9 8" className="h-2 w-[9px]">
            <path d="M0 0.5H9M0.5 3.5H8.5L4.5 7.5Z" fill="#999" stroke="#777" />
          </svg>
        </button>
      </div>
      <div className="relative min-h-0 flex-1 overflow-hidden border-r border-l border-[#d5dadd] bg-linear-to-b from-white to-[#9c9c9c] pt-[5px]">
        <Model />
        <ViewToolbar />
        <p className="relative mt-px pl-3.5 font-['Liberation_Sans',sans-serif] text-[13px] leading-4 text-black">
          Hold down &lt;F2&gt; for dynamic viewing.
          <br />
          &lt;F8&gt; or &lt;Shift-roll&gt; to find next valid filter setting.
        </p>
        <svg viewBox="0 0 60 84" className="absolute bottom-[27px] left-11 h-[84px] w-[60px]" aria-hidden="true">
          <Axes />
        </svg>
        <span className="absolute bottom-0.5 left-1 text-[15px] leading-5 text-[#1a1a1a]">8.73858 in</span>
      </div>
    </main>
  );
}

// ---------------------------------------------------------------- status bar

function StatusBar() {
  return (
    <footer className="flex h-[30px] shrink-0 items-center border-t border-b border-t-[#b9c2ca] border-b-[#14141c] pl-1.5 text-[#444]">
      <span className="flex-1">Select command or entity.</span>
      <span className="mr-[7px] h-6 w-px bg-[#8b9299]" />
      <button
        type="button"
        aria-label="Toggle hints"
        className="flex h-[22px] w-[23px] items-center justify-center border border-[#d9a52a] bg-[#ffe27a]"
      >
        <svg viewBox="0 0 14 14" className="size-3.5">
          <path d="M0.5 0.5H13.5V13.5H0.5Z" fill="#fff" stroke="#3f6fc4" />
          <path d="M0 0H14V3H0Z" fill="#4a7fd6" />
          <path d="M2.5 4V12" stroke="#555" strokeDasharray="1 1" />
          <path d="M6 5H12" stroke="#333" strokeWidth="2" />
          <path d="M9 6V12" stroke="#c8232b" strokeWidth="2" />
        </svg>
      </button>
      <button type="button" aria-label="Message log" className="mr-[11px] ml-2.5">
        <svg viewBox="0 0 14 14" className="size-3.5">
          <path d="M0.5 0.5H13.5V13.5H0.5Z" fill="#fff" stroke="#5b86cf" />
          <path d="M0 0H14V4H0Z" fill="#4a7fd6" />
          <path d="M2 6.5H12M2 8.5H12M2 10.5H10" stroke="#8a94a8" />
        </svg>
      </button>
      <input
        aria-label="Command"
        className="mr-px h-[22px] w-[350px] border border-[#b3bec6] bg-white px-1 outline-none"
      />
    </footer>
  );
}

export default function App() {
  return (
    <div className="flex h-screen flex-col overflow-hidden bg-[#e2e4e6] font-['Open_Sans','Noto_Sans',sans-serif] text-xs leading-4">
      <Defs />
      <TitleBar />
      <RibbonTabs />
      <Ribbon />
      <SelectionBar />
      <div className="flex min-h-0 flex-1">
        <Manager />
        <Viewport />
      </div>
      <StatusBar />
    </div>
  );
}
